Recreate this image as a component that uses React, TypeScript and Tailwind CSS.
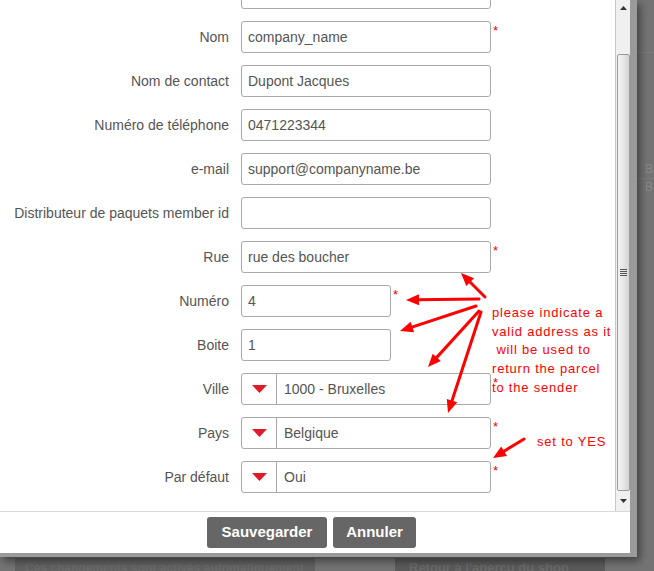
import React from "react";

type Row = {
  label: string;
  value: string;
  required?: boolean;
  short?: boolean;
  select?: boolean;
};

const rows: Row[] = [
  { label: "", value: "" },
  { label: "Nom", value: "company_name", required: true },
  { label: "Nom de contact", value: "Dupont Jacques" },
  { label: "Numéro de téléphone", value: "0471223344" },
  { label: "e-mail", value: "support@companyname.be" },
  { label: "Distributeur de paquets member id", value: "" },
  { label: "Rue", value: "rue des boucher", required: true },
  { label: "Numéro", value: "4", short: true, required: true },
  { label: "Boite", value: "1", short: true },
  { label: "Ville", value: "1000 - Bruxelles", select: true, required: true },
  { label: "Pays", value: "Belgique", select: true, required: true },
  { label: "Par défaut", value: "Oui", select: true, required: true },
];

function Arrow({ x1, y1, x2, y2 }: { x1: number; y1: number; x2: number; y2: number }) {
  const dx = x2 - x1;
  const dy = y2 - y1;
  const len = Math.sqrt(dx * dx + dy * dy);
  const ux = dx / len;
  const uy = dy / len;
  const hl = 13;
  const hw = 5.5;
  const bx = x2 - ux * hl;
  const by = y2 - uy * hl;
  const px = -uy;
  const py = ux;
  const pts = `${x2},${y2} ${bx + px * hw},${by + py * hw} ${bx - px * hw},${by - py * hw}`;
  return (
    <g>
      <line x1={x1} y1={y1} x2={bx + ux * 2} y2={by + uy * 2} stroke="#f00" strokeWidth={3} strokeLinecap="round" />
      <polygon points={pts} fill="#f00" />
    </g>
  );
}

function Field({ row }: { row: Row }) {
  const width = row.short ? "w-[150px]" : "w-[250px]";
  return (
    <div className="flex items-start h-[32px] mb-[12px]">
      <div className="w-[229px] h-[32px] flex items-center justify-end text-[14px] text-[#555] whitespace-nowrap">
        {row.label}
      </div>
      <div className={`ml-[12px] ${width} h-[32px] border border-[#a9a9a9] rounded-[3px] bg-white flex items-center text-[14px] text-[#555]`}>
        {row.select ? (
          <>
            <div className="w-[35px] h-full flex items-center justify-center border-r border-[#a9a9a9]">
              <svg width="15" height="8" viewBox="0 0 15 8">
                <polygon points="0,0 15,0 7.5,8" fill="#e01a2a" />
              </svg>
            </div>
            <span className="pl-[7px]">{row.value}</span>
          </>
        ) : (
          <span className="pl-[6px]">{row.value}</span>
        )}
      </div>
      {row.required && (
        <span className="ml-[2px] mt-[3px] text-[13px] leading-none text-[#f00]">*</span>
      )}
    </div>
  );
}

export default function App() {
  return (
    <div
      className="relative w-[654px] h-[571px] overflow-hidden bg-[#737373]"
      style={{ fontFamily: '"Liberation Sans", Arial, sans-serif' }}
    >
      {/* faint background page */}
      <div className="absolute left-[637px] top-[52px] w-[17px] h-px bg-[#7c7c7c]" />
      <div className="absolute left-[637px] top-[178px] w-[17px] h-px bg-[#7c7c7c]" />
      <div className="absolute left-[645px] top-[161px] text-[12px] text-[#888] leading-[16px]">B</div>
      <div className="absolute left-[645px] top-[179px] text-[12px] text-[#888] leading-[16px]">B</div>
      <div className="absolute left-[15px] top-[558px] w-[300px] h-[14px] bg-[#616161] overflow-hidden text-[12px] leading-[14px] text-[#6a6a6a] font-bold pl-[10px] whitespace-nowrap">
        <span className="relative top-[3px]">Ces changements sont activés automatiquement</span>
      </div>
      <div className="absolute left-[395px] top-[558px] w-[210px] h-[14px] bg-[#5a5a5a] overflow-hidden text-[13px] leading-[14px] text-[#6a6a6a] font-bold pl-[14px] whitespace-nowrap">
        <span className="relative top-[3px]">Retour à l'aperçu du shop</span>
      </div>

      {/* dialog */}
      <div className="absolute left-0 top-0 w-[637px] h-[557px] bg-[#9a9a9a] shadow-[3px_4px_8px_rgba(0,0,0,0.45)]">
        <div className="w-[630px] h-[553px] bg-white flex flex-col">
          <div className="h-[512px] flex border-b border-[#d8d8d8]">
            <div className="w-[615px] h-full overflow-hidden">
              <div className="mt-[-23px]">
                {rows.map((r, i) => (
                  <Field key={i} row={r} />
                ))}
              </div>
            </div>
            {/* scrollbar */}
            <div className="w-[15px] h-full bg-[#f0f0f0] border-l border-[#c8c8c8] flex flex-col items-center">
              <div className="h-[16px] flex items-center justify-center">
                <svg width="7" height="4" viewBox="0 0 7 4">
                  <polygon points="0,4 7,4 3.5,0" fill="#333" />
                </svg>
              </div>
              <div className="mt-[38px] w-[13px] h-[437px] rounded-[2px] border border-[#9b9b9b] bg-gradient-to-r from-[#f4f4f4] via-[#e6e6e6] to-[#d4d4d4] flex items-center justify-center">
                <div className="flex flex-col gap-[1px]">
                  <div className="w-[7px] h-px bg-[#555]" />
                  <div className="w-[7px] h-px bg-[#555]" />
                  <div className="w-[7px] h-px bg-[#555]" />
                  <div className="w-[7px] h-px bg-[#555]" />
                </div>
              </div>
              <div className="flex-1 flex items-center justify-center">
                <svg width="7" height="4" viewBox="0 0 7 4">
                  <polygon points="0,0 7,0 3.5,4" fill="#333" />
                </svg>
              </div>
            </div>
          </div>
          <div className="flex gap-[6px] pl-[207px] pt-[5px]">
            <div className="w-[120px] h-[31px] rounded-[3px] bg-[#666] text-white font-bold text-[15px] flex items-center justify-center">
              Sauvegarder
            </div>
            <div className="w-[83px] h-[31px] rounded-[3px] bg-[#666] text-white font-bold text-[15px] flex items-center justify-center">
              Annuler
            </div>
          </div>
        </div>
      </div>

      {/* annotations */}
      <svg className="absolute left-0 top-0 pointer-events-none" width="654" height="571">
        <Arrow x1={485} y1={297} x2={461} y2={273} />
        <Arrow x1={479} y1={299} x2={406} y2={300} />
        <Arrow x1={476} y1={306} x2={400} y2={331} />
        <Arrow x1={479} y1={311} x2={428} y2={367} />
        <Arrow x1={481} y1={312} x2={448} y2={413} />
        <Arrow x1={524} y1={439} x2={493} y2={458} />
      </svg>
      <div className="absolute left-[492px] top-[304px] text-[13px] leading-[18.7px] text-[#f00] tracking-[0.8px] whitespace-pre">
        {"please indicate a\nvalid address as it\n will be used to\nreturn the parcel\nto the sender"}
      </div>
      <div className="absolute left-[537px] top-[433px] text-[13px] leading-[18px] text-[#f00] tracking-[0.8px] whitespace-pre">
        set to YES
      </div>
    </div>
  );
}
